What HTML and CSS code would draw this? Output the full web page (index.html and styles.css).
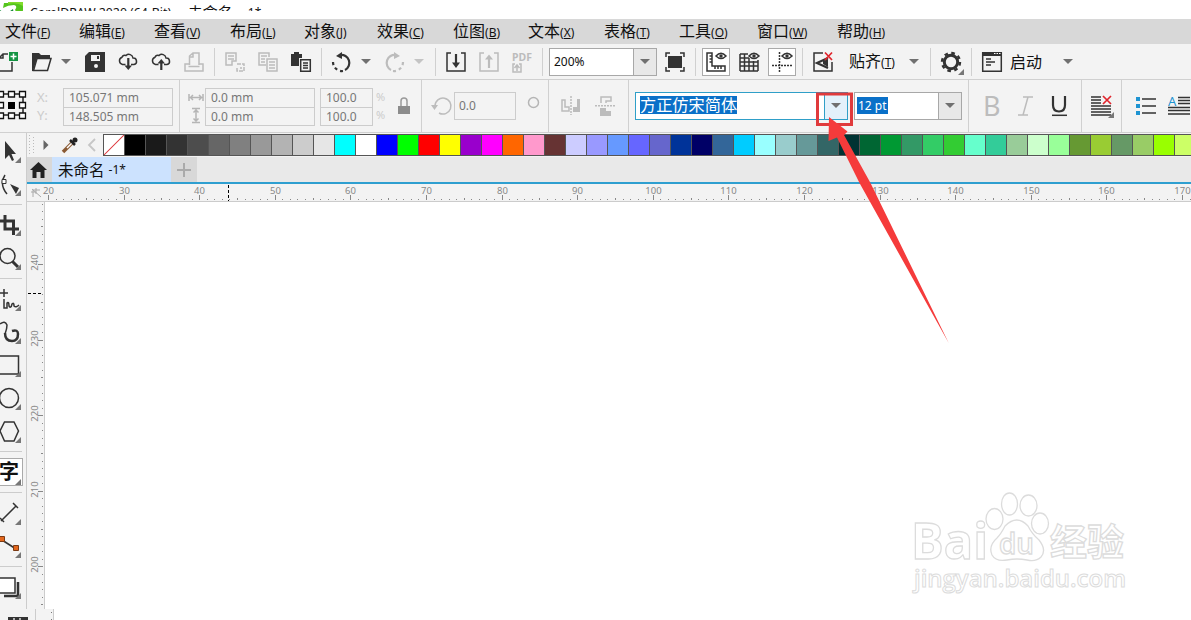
FILE: index.html
```html
<!DOCTYPE html>
<html lang="zh-CN">
<head>
    <meta charset="UTF-8">
    <meta name="viewport" content="width=device-width, initial-scale=1.0">
    <title>CorelDRAW 2020</title>
    <link rel="stylesheet" href="styles.css">
</head>
<body>

    <!-- Title bar -->
    <header class="titlebar">
        <svg class="titlebar__logo" width="26" height="16" viewBox="0 0 26 16">
            <path d="M4 3H23V10Q23 13 18 14L15 10Q18 6 14 5Q8 5 3 8Z" fill="#54c41c"/>
            <path d="M8 2H23V6Q17 2 8 4Z" fill="#80dc2c"/>
            <path d="M0 10Q6 15 13 9L14 15H0Z" fill="#168a3a"/>
        </svg>
        <span class="titlebar__app">CorelDRAW 2020 (64-Bit)</span>
        <span class="titlebar__doc">- 未命名</span>
        <span>-1*</span>
    </header>

    <!-- Menu -->
    <nav class="menu">
        <span>文件<small>(<u>F</u>)</small></span>
        <span>编辑<small>(<u>E</u>)</small></span>
        <span>查看<small>(<u>V</u>)</small></span>
        <span>布局<small>(<u>L</u>)</small></span>
        <span>对象<small>(<u>J</u>)</small></span>
        <span>效果<small>(<u>C</u>)</small></span>
        <span>位图<small>(<u>B</u>)</small></span>
        <span>文本<small>(<u>X</u>)</small></span>
        <span>表格<small>(<u>T</u>)</small></span>
        <span>工具<small>(<u>O</u>)</small></span>
        <span>窗口<small>(<u>W</u>)</small></span>
        <span>帮助<small>(<u>H</u>)</small></span>
    </nav>

    <!-- Standard toolbar -->
    <div class="toolbar">
        <svg class="icon" viewBox="0 0 20 20"><path d="M0 6L4 2H9M13 10V19H0M0 6H4V2" class="line"/><path d="M10 0H19V9H10Z" fill="#149443"/><path d="M14.5 1.500V7.500M11.500 4.500H17.500" stroke="#fff" stroke-width="1.500"/></svg>
        <svg class="icon" viewBox="0 0 20 20"><path d="M0 1H7L9 3H18V6H5L1 19H0Z" class="solid"/><path d="M5 6.500H19L15.500 18.500H1.500Z" class="line"/></svg>
        <svg class="caret" viewBox="0 0 14 6"><path d="M2 0H12L7 5Z"/></svg>
        <svg class="icon" viewBox="0 0 20 20"><path d="M4 0H20V20H0V4Z" class="solid"/><path d="M6 3H15V9H6ZM9 14A2 2 0 1 0 13 14A2 2 0 1 0 9 14" fill="#f3f3f3"/><path d="M12 4H14V7H12Z" class="solid"/></svg>
        <svg class="icon" viewBox="0 0 20 20"><path d="M7.500 12.500H4.500A3.800 3.800 0 0 1 4 5.200A3 3 0 0 1 8 3.500A4.200 4.200 0 0 1 15 6A3.300 3.300 0 0 1 16 12.500H13" class="line"/><path d="M10.300 6V15" class="line thick"/><path d="M6.500 13.500H14L10.300 18Z" class="solid"/></svg>
        <svg class="icon" viewBox="0 0 20 20"><path d="M7.500 12.500H4.500A3.800 3.800 0 0 1 4 5.200A3 3 0 0 1 8 3.500A4.200 4.200 0 0 1 15 6A3.300 3.300 0 0 1 16 12.500H13" class="line"/><path d="M10.300 9V18" class="line thick"/><path d="M6.500 11.500H14L10.300 7Z" class="solid"/></svg>
        <svg class="icon icon--off" viewBox="0 0 20 20"><path d="M5.500 13V4L9 1H15V13M9 1V5H5M5 12H1V19H19V12H15M4.500 14.500H15.500" class="line"/></svg>
        <i class="sep"></i>
        <svg class="icon icon--off" viewBox="0 0 20 20"><path d="M1 1H11V9H7V13H1ZM3 4H9M3 7H9" class="line"/><path d="M12 12H19V19H12V16M15 16H17" class="line" stroke-dasharray="4 1"/></svg>
        <svg class="icon icon--off" viewBox="0 0 20 20"><path d="M8 13H1V1H11V5M3 4H9M3 7H7M3 10H7M9 7H19V19H9ZM11 10H17M11 13H17M11 16H17" class="line"/></svg>
        <svg class="icon" viewBox="0 0 20 20"><path d="M0 2H3V0H8V2H11V6H8V14H0Z" class="solid"/><path d="M9.700 7.700H19.300V19.300H9.700ZM12 11H17M12 13.500H17M12 16H17" class="line"/></svg>
        <i class="sep"></i>
        <svg class="icon" viewBox="0 0 20 20"><path d="M9 3A8 8 0 0 1 14 18" class="line thick"/><path d="M12 19A9 9 0 0 1 2 10" class="line thick" stroke-dasharray="3 3"/><path d="M5 4L11 0V7Z" class="solid"/></svg>
        <svg class="caret" viewBox="0 0 14 6"><path d="M2 0H12L7 5Z"/></svg>
        <svg class="icon icon--off" viewBox="0 0 20 20"><path d="M12 3A8 8 0 0 0 7 18" class="line thick"/><path d="M9 19A9 9 0 0 0 19 10" class="line thick" stroke-dasharray="3 3"/><path d="M16 4L10 0V7Z" class="solid"/></svg>
        <svg class="caret caret--off" viewBox="0 0 14 6"><path d="M2 0H12L7 5Z"/></svg>
        <i class="sep"></i>
        <svg class="icon" viewBox="0 0 20 20"><path d="M5 1H1V19H19V1H15" class="line"/><path d="M10 2V12" class="line thick"/><path d="M6 10.500H14L10 16Z" class="solid"/></svg>
        <svg class="icon icon--off" viewBox="0 0 20 20"><path d="M5 1H1V19H19V1H15" class="line"/><path d="M10 6V16" class="line thick"/><path d="M6 7.500H14L10 2.500Z" class="solid"/></svg>
        <div class="pdf">PDF<svg width="10" height="10" viewBox="0 0 10 10"><path d="M3 1H1V9H9V1H7M5 8V3M2.500 5L5 2L7.500 5" class="line"/></svg></div>
        <i class="sep"></i>
        <div class="combo combo--zoom"><span>200%</span><b><svg class="caret" viewBox="0 0 14 6"><path d="M2 0H12L7 5Z"/></svg></b></div>
        <svg class="icon" viewBox="0 0 20 20"><path d="M1 5V1H5M15 1H19V5M19 15V19H15M5 19H1V15" class="line"/><path d="M3 4H17V16H3Z" class="solid"/></svg>
        <i class="sep"></i>
        <div class="toggle"><svg class="icon" viewBox="0 0 20 20"><path d="M1 1H6V14H19V19H1ZM3.500 4H6M3.500 7H6M3.500 10H6M9 14V17M12 14V17M15 14V17" class="line"/><path d="M10 4Q15 -1.500 20 4Q15 9 10 4Z" class="line"/><circle cx="15" cy="4" r="1.700" class="solid"/></svg></div>
        <svg class="icon" viewBox="0 0 20 20"><path d="M1 2H9M1 6H10M1 10H19M1 14H19M1 19H19M1 2V19M5.500 2V19M10 6V19M14.500 9V19M19 8V19" class="line"/><path d="M10 4Q15 -1.500 20 4Q15 9 10 4Z" class="line"/><circle cx="15" cy="4" r="1.700" class="solid"/></svg>
        <div class="toggle"><svg class="icon" viewBox="0 0 20 20"><path d="M7.500 0V20M0 13.500H20" class="line" stroke-dasharray="2 1"/><path d="M10 4Q15 -1.500 20 4Q15 9 10 4Z" class="line"/><circle cx="15" cy="4" r="1.700" class="solid"/></svg></div>
        <i class="sep"></i>
        <svg class="icon" viewBox="0 0 20 20"><path d="M10 1H1V19H19V10" class="line"/><path d="M15 6L4 11L15 16" class="line thick"/><path d="M10 9L15 7V15L10 12Z" class="solid"/><path d="M12 0.500L19 8M19 0.500L12 8" stroke="#e0242c" stroke-width="1.700"/></svg>
        <span class="toolbar__text">贴齐<small>(<u>T</u>)</small></span>
        <svg class="caret" viewBox="0 0 14 6"><path d="M2 0H12L7 5Z"/></svg>
        <i class="sep"></i>
        <svg class="icon icon--gear" viewBox="0 0 24 23"><circle cx="10" cy="10" r="6.700" fill="none" stroke="#333" stroke-width="3"/><circle cx="10" cy="10" r="9" fill="none" stroke="#333" stroke-width="2.400" stroke-dasharray="3.600 3.470"/><path d="M23 17V23H17Z" fill="#777"/></svg>
        <i class="sep"></i>
        <svg class="icon" viewBox="0 0 20 20"><path d="M0.700 0.700H19.300V19.300H0.700ZM4 7H9M4 10H13M4 13H9" class="line"/><path d="M0 0H20V4H0Z" class="solid"/><path d="M12 1.500H19" stroke="#fff" stroke-dasharray="1.500 1"/></svg>
        <span class="toolbar__text">启动</span>
        <svg class="caret" viewBox="0 0 14 6"><path d="M2 0H12L7 5Z"/></svg>
    </div>

    <!-- Property bar -->
    <div class="props">
        <svg class="origin" width="28" height="32" viewBox="0 0 28 32"><path d="M1 5H23V26H1M23 5V26" fill="none" stroke="#222" stroke-width="1.500"/><g fill="#fff" stroke="#111" stroke-width="1.300"><path d="M-2 2.500H3.500V8H-2ZM-2 13.500H3.500V19H-2ZM-2 24H3.500V29.500H-2ZM8.500 2.500H14.500V8H8.500ZM8.500 24H14.500V29.500H8.500ZM19.500 2.500H25.500V8H19.500ZM19.500 13.500H25.500V19H19.500ZM19.500 24H25.500V29.500H19.500Z"/></g><path d="M8 13H15V20H8Z" fill="#000"/></svg>
        <div class="pair"><span>X:</span><span>Y:</span></div>
        <div class="fields"><span>105.071 mm</span><span>148.505 mm</span></div>
        <i class="sep"></i>
        <svg width="16" height="36" viewBox="0 0 16 36"><g fill="none" stroke="#b5b5b5" stroke-width="1.500"><path d="M1 6V13M15 6V13M2 9.500H14M5 7L2.500 9.500L5 12M11 7L13.500 9.500L11 12M4 20.500H12M4 34.500H12M8 21V34M5.500 24.500L8 22L10.500 24.500M5.500 30.500L8 33L10.500 30.500"/></g></svg>
        <div class="fields"><span>0.0 mm</span><span>0.0 mm</span></div>
        <div class="fields"><span>100.0</span><span>100.0</span></div>
        <div class="pair pair--percent"><span>%</span><span>%</span></div>
        <svg width="14" height="18" viewBox="0 0 14 18"><path d="M4 9V4A3 3 0 0 1 10 4V9" fill="none" stroke="#9a9a9a" stroke-width="1.500"/><path d="M1 9H13V17H1Z" fill="#8c8c8c"/></svg>
        <i class="sep"></i>
        <svg class="icon icon--off" viewBox="0 0 20 20"><path d="M3 10A8 8 0 1 1 7 17" class="line"/><path d="M-1 9H6L2.500 14Z" class="solid"/></svg>
        <div class="angle">0.0</div>
        <svg class="degree" width="13" height="13" viewBox="0 0 13 13"><circle cx="6.500" cy="6.500" r="5" fill="none" stroke="#b5b5b5" stroke-width="1.500"/></svg>
        <i class="sep"></i>
        <svg class="icon icon--off" viewBox="0 0 20 20"><path d="M1 4H4V11H8V15H1Z" class="line"/><path d="M19 3H16V11H12V16H19Z" class="solid"/><path d="M10 0V19" class="line" stroke-dasharray="2 1"/></svg>
        <svg class="icon icon--off" viewBox="0 0 20 20"><path d="M6 7V1H16V5H11V7" class="line"/><path d="M5 12V20H16V15H11V12Z" class="solid"/><path d="M0 9.700H20" class="line" stroke-dasharray="2 1"/></svg>
        <i class="sep"></i>
        <div class="combo combo--font"><span><mark>方正仿宋简体</mark></span><b><svg class="caret" viewBox="0 0 14 6"><path d="M2 0H12L7 5Z"/></svg></b></div>
        <div class="combo combo--size"><span><mark>12 pt</mark></span><b><svg class="caret" viewBox="0 0 14 6"><path d="M2 0H12L7 5Z"/></svg></b></div>
        <i class="sep"></i>
        <span class="style-btn style-btn--bold">B</span>
        <svg class="icon icon--off" viewBox="0 0 20 20"><path d="M5 1H15M0 19H10M10 1L5 19" class="line"/></svg>
        <svg class="icon" viewBox="0 0 20 20"><path d="M4 0V9Q4 15.500 10 15.500Q16 15.500 16 9V0" fill="none" stroke="#333" stroke-width="2.200"/><path d="M3 19.300H18" class="line"/></svg>
        <i class="sep"></i>
        <svg width="24" height="24" viewBox="0 0 24 24"><path d="M0 3H10M0 6H10M0 9H10M0 12H20M0 15H20M0 18H20M0 21H20" class="line"/><path d="M12 2L20 10M20 2L12 10" stroke="#e0242c" stroke-width="1.700"/><path d="M23 18V24H17Z" fill="#777"/></svg>
        <i class="sep"></i>
        <svg width="22" height="20" viewBox="0 0 22 20"><path d="M1 1H5V5H1ZM1 8H5V12H1ZM1 15H5V19H1Z" fill="#1e94d2"/><path d="M7 3H21M7 10H21M7 17H21" class="line"/></svg>
        <div class="dropcap"><svg width="22" height="20" viewBox="0 0 22 20"><path d="M10 1.500H22M10 4.500H22M10 7.500H22M0 11.500H22M0 14.500H22M0 18H22" class="line"/><text x="0" y="9.500" font-size="13" fill="#1e94d2">A</text></svg></div>
    </div>

    <div class="workspace">
        <!-- Toolbox -->
        <aside class="toolbox">
            <svg height="35" viewBox="0 0 26 35"><path d="M5 8V26L9 22L12 28L14 27L11.500 21H16Z" class="solid"/><path d="M21 24V30H15Z" class="fly"/></svg>
            <svg height="36" viewBox="0 0 26 36"><path d="M5 7Q-1 16 7 26" class="line"/><path d="M2 11.500H6V15.500H2Z" fill="#fff" stroke="#333"/><path d="M10 16L19 20L16 26Z" class="solid"/><path d="M21 22V28H15Z" class="fly"/></svg>
            <hr>
            <svg height="36" viewBox="0 0 26 36"><path d="M0 16H13.500V30M5 10V24H19" fill="none" stroke="#333" stroke-width="3"/><path d="M21 25V31H15Z" class="fly"/></svg>
            <svg height="37" viewBox="0 0 26 37"><circle cx="7.500" cy="15" r="7.500" class="line" fill="none"/><path d="M12.500 20.500L18 26" stroke="#333" stroke-width="3"/><path d="M21 23V29H15Z" class="fly"/></svg>
            <hr>
            <svg height="37" viewBox="0 0 26 37"><path d="M0 14H8M4 10V18M4 20V29H7V24Q9 22 9 27Q11 30 12 25Q14 23 14 27Q16 29 19 26" class="line"/><path d="M21 26V32H15Z" class="fly"/></svg>
            <svg height="33" viewBox="0 0 26 33"><path d="M0 8Q5 4 7 9Q7 13 5 18" class="line"/><path d="M5 17Q5 25 12 25Q18 25 18 18Q18 13 12 15" fill="none" stroke="#333" stroke-width="2.500"/><path d="M21 22V28H15Z" class="fly"/></svg>
            <svg height="33" viewBox="0 0 26 33"><path d="M-1 7H18.500V25H-1" class="line"/><path d="M21 22V28H15Z" class="fly"/></svg>
            <svg height="33" viewBox="0 0 26 33"><circle cx="9" cy="16" r="9.500" class="line"/><path d="M21 22V28H15Z" class="fly"/></svg>
            <svg height="36" viewBox="0 0 26 36"><path d="M4.500 7H14L18.500 16L14 26H4.500L0 16Z" class="line"/><path d="M21 22V28H15Z" class="fly"/></svg>
            <hr>
            <div class="toolbox__text"><span>字</span><svg width="6" height="6" viewBox="0 0 6 6"><path d="M6 0V6H0Z" class="fly"/></svg></div>
            <hr>
            <svg height="37" viewBox="0 0 26 37"><path d="M1 28L16 13M0 25L4 29M13 10L18 15" class="line"/><path d="M21 26V32H15Z" class="fly"/></svg>
            <svg height="36" viewBox="0 0 26 36"><path d="M2 10L16 19" class="line"/><path d="M-1 6.500H4.500V11.500H-1ZM13.500 20.500V15.500H18.500V20.500Z" fill="#e2661c" stroke="#7a3a14"/><path d="M21 22V28H15Z" class="fly"/></svg>
            <hr>
            <svg height="41" viewBox="0 0 26 41"><path d="M18 15V29H4" fill="none" stroke="#333" stroke-width="2.500"/><path d="M-1 11H15V26H-1" fill="#fff" stroke="#333" stroke-width="1.500"/><path d="M21 26V32H15Z" class="fly"/></svg>
        </aside>

        <main class="document">
            <!-- Color palette -->
            <div class="palette">
                <svg width="7" height="20" viewBox="0 0 7 20"><path d="M1.500 0V20M5.500 2V20" stroke="#bbb" stroke-dasharray="1 2"/></svg>
                <svg width="6" height="10" viewBox="0 0 6 10"><path d="M0.500 0L5.500 5L0.500 10Z" fill="#666"/></svg>
                <svg width="18" height="18" viewBox="0 0 18 18"><path d="M1 16L10 7" stroke="#8a5a34" stroke-width="3.500"/><path d="M5 12L10 7" stroke="#fff" stroke-width="1.500"/><path d="M8 4L13 9M10 7L14 3" stroke="#222" stroke-width="2.500"/><circle cx="13" cy="4" r="2.500" fill="#222"/></svg>
                <svg width="9" height="14" viewBox="0 0 9 14"><path d="M7 1L1 7L7 13" fill="none" stroke="#c6c6c6" stroke-width="1.800"/></svg>
                <div class="swatches" id="swatches"></div>
            </div>

            <!-- Document tabs -->
            <div class="tabs">
                <div class="tabs__home"><svg width="17" height="16" viewBox="0 0 17 16"><path d="M8.500 0L17 8H14.500V16H10.500V10H6.500V16H2.500V8H0Z" fill="#222"/></svg></div>
                <div class="tabs__item">未命名 <small>-1*</small></div>
                <div class="tabs__add"><svg width="14" height="14" viewBox="0 0 14 14"><path d="M7 0V14M0 7H14" stroke="#aaa" stroke-width="2"/></svg></div>
            </div>

            <svg class="ruler-x" id="rulerX" width="1164" height="17" viewBox="27 184 1164 17"><path d="M32 189L41 197M33 197V190H40M31 192H36M36 188V194" fill="none" stroke="#aaa"/></svg>
            <div class="page">
                <svg class="ruler-y" id="rulerY" width="17" height="407" viewBox="27 202 17 407"></svg>
                <div class="canvas"></div>
            </div>
        </main>
    </div>

    <footer class="footer">
        <svg width="60" height="12" viewBox="0 0 60 12"><path d="M0 0H53V12H0Z" fill="#f3f3f3"/><path d="M8 8H28V12H8Z" fill="#333"/><path d="M14 9V12M20 9V12" stroke="#ddd" stroke-width="1.500"/><path d="M35.500 0V12M53.500 0V12" stroke="#ccc"/><path d="M51.500 3V12" stroke="#777" stroke-dasharray="1 6"/></svg>
    </footer>

    <!-- Watermark -->
    <svg class="watermark" width="230" height="120" viewBox="905 480 230 120">
        <g fill="#fff" stroke="#dcdcdc" stroke-width="1.300">
            <text x="911" y="559" font-size="50" font-weight="700" textLength="77" lengthAdjust="spacingAndGlyphs">Bai</text>
            <ellipse cx="994.500" cy="519" rx="8.500" ry="10.500"/>
            <ellipse cx="1009.500" cy="504" rx="8" ry="11"/>
            <ellipse cx="1028.500" cy="505.500" rx="8.500" ry="10.500"/>
            <ellipse cx="1040" cy="523.500" rx="8.500" ry="10.500"/>
            <path d="M1005 526Q1017 514 1028 526Q1032 534 1039 540Q1047 550 1041 557Q1036 562 1027 560Q1017 558 1007 560Q996 562 992 555Q988 546 997 538Q1001 534 1005 526Z"/>
            <text x="999" y="554" font-size="28" font-weight="600" textLength="35" lengthAdjust="spacingAndGlyphs">du</text>
            <text x="1050" y="556" font-size="37" font-weight="700" textLength="74" class="cjk">经验</text>
            <text x="914" y="587" font-size="24" font-weight="600" stroke-width="1" textLength="212" lengthAdjust="spacingAndGlyphs">jingyan.baidu.com</text>
        </g>
    </svg>

    <!-- Arrow over the font list -->
    <svg class="pointer" width="140" height="260" viewBox="814 90 140 260">
        <path d="M817.500 94H851.500V124.500H817.500Z" fill="none" stroke="#e03a3c" stroke-width="3"/>
        <path d="M829 117L847.500 131.500L844 135L870.500 183L948.700 343L859.500 183L837 137.500L828.500 141Z" fill="#f53b3b"/>
    </svg>

    <script src="script.js"></script>
</body>
</html>
```
FILE: styles.css
```css
* {
    box-sizing: border-box;
}

body {
    margin: 0;
    width: 1191px;
    height: 620px;
    overflow: hidden;
    position: relative;
    background: #fff;
    color: #111;
    font-family: "Noto Sans", "Noto Sans CJK SC", sans-serif;
    font-size: 12px;
}

svg {
    display: block;
    overflow: visible;
}

small {
    font-size: 12px;
}

/* Title bar */
.titlebar {
    display: flex;
    height: 11px;
    margin-bottom: 8px;
    overflow: hidden;
    line-height: 25px;
    white-space: nowrap;
}

.titlebar__logo {
    flex: none;
    margin-right: 4px;
}

.titlebar__app {
    width: 147px;
    font-size: 12.3px;
}

.titlebar__doc {
    width: 67px;
    padding-left: 2px;
    font-size: 15px;
}

/* Menu */
.menu {
    display: grid;
    grid-template-columns: 74px 75px 76px 74px 73px 76px 75px 76px 75px 78px 80px 60px;
    height: 25px;
    padding-left: 5px;
    background: #d8d8d8;
    font-size: 16px;
    line-height: 25px;
    white-space: nowrap;
}

/* Icons */
.icon {
    width: 20px;
    height: 20px;
}

.icon--gear {
    width: 24px;
    height: 23px;
    margin-top: 3px;
}

.line {
    fill: none;
    stroke: #333;
    stroke-width: 1.5;
}

.thick {
    stroke-width: 2.2;
}

.solid {
    fill: #333;
}

.icon--off .line,
.pdf .line {
    stroke: #bcbcbc;
}

.icon--off .solid {
    fill: #bcbcbc;
}

.fly {
    fill: #777;
}

.caret {
    width: 14px;
    height: 6px;
    fill: #707070;
}

.caret--off {
    fill: #c4c4c4;
}

.sep {
    width: 1px;
    height: 28px;
    background: #d0d0d0;
}

/* Standard toolbar */
.toolbar {
    display: grid;
    grid-template-columns: 32px 27px 26px 33px 33px 33px 30px 11px 33px 33px 30px 10px 28px 25px 28px 23px 11px 33px 33px 30px 7px 116px 30px 7px 37px 29px 34px 11px 36px 58px 23px 11px 30px 11px 28px 51px 14px;
    align-items: center;
    height: 36px;
    padding-top: 1px;
    background: #f3f3f3;
    border-bottom: 1px solid #d0d0d0;
}

.toolbar > .icon:first-child {
    margin-left: -1px;
}

.toolbar__text {
    font-size: 16px;
    line-height: 24px;
    white-space: nowrap;
}

.toggle {
    display: flex;
    align-items: center;
    justify-content: center;
    width: 28px;
    height: 28px;
    border: 1px solid #aaa;
    background: #fff;
}

.pdf {
    color: #bcbcbc;
    font-size: 10.5px;
    font-weight: bold;
    line-height: 11px;
}

.combo {
    display: flex;
    height: 28px;
    border: 1px solid #a8a8a8;
    background: #fff;
    line-height: 26px;
}

.combo span {
    flex: 1;
    padding-left: 4px;
}

.combo b {
    display: flex;
    align-items: center;
    justify-content: center;
    width: 23px;
    border-left: 1px solid #a8a8a8;
    background: #e8e8e8;
}

.combo mark {
    background: #0a70c8;
    color: #fff;
}

.combo--zoom {
    width: 108px;
}

.combo--font {
    width: 213px;
    border-color: #2f9fc8;
}

.combo--font span {
    font-size: 16.2px;
}

.combo--font mark {
    display: block;
    width: 97px;
    height: 18px;
    margin-top: 3px;
    line-height: 18px;
    white-space: nowrap;
}

.combo--font b {
    border-color: #2f9fc8;
    background: #e3f1fb;
}

.combo--size {
    width: 108px;
}

.combo--size span {
    padding-left: 2px;
}

.combo--size mark {
    padding: 0 1px;
}

/* Property bar */
.props {
    display: grid;
    grid-template-columns: 37px 26px 116px 9px 17px 115px 56px 21px 24px 11px 22px 73px 21px 13px 34px 33px 7px 219px 114px 15px 35px 31px 32px 10px 30px 14px 33px 22px;
    align-items: center;
    height: 53px;
    background: #f3f3f3;
    border-bottom: 1px solid #d0d0d0;
    color: #777;
}

.props .sep {
    height: 52px;
}

.origin {
    margin-top: -3px;
}

.pair {
    color: #ccc;
    font-size: 13px;
    line-height: 18px;
}

.pair span {
    display: block;
}

.pair--percent {
    font-size: 11px;
}

.fields {
    width: 110px;
    margin-top: 1px;
    border: 1px solid #ccc;
    line-height: 18px;
    font-size: 12px;
}

.fields + .fields {
    width: 53px;
}

.fields span {
    display: block;
    height: 18px;
    padding-left: 5px;
}

.fields span + span {
    border-top: 1px solid #ccc;
}

.angle {
    width: 62px;
    height: 28px;
    padding-left: 4px;
    border: 1px solid #ccc;
    line-height: 26px;
}

.degree {
    margin-top: -8px;
}

.style-btn--bold {
    color: #bcbcbc;
    font-size: 27px;
    line-height: 28px;
}

.dropcap {
    overflow: hidden;
}

/* Workspace */
.workspace {
    display: flex;
    height: 476px;
}

.toolbox {
    width: 27px;
    border-right: 1px solid #ccc;
    background: #f3f3f3;
    overflow: hidden;
}

.toolbox > svg {
    width: 26px;
}

.toolbox hr {
    width: 22px;
    height: 1px;
    margin: 0;
    border: none;
    background: #ccc;
}

.toolbox__text {
    display: flex;
    align-items: flex-end;
    width: 23px;
    height: 28px;
    margin: 6px 0;
    border: 1px solid #aaa;
    border-left: none;
    background: #fff;
}

.toolbox__text span {
    width: 16px;
    margin-left: -1px;
    font-size: 20px;
    font-weight: bold;
    line-height: 26px;
}

.document {
    width: 1164px;
}

/* Palette */
.palette {
    display: grid;
    grid-template-columns: 15px 19px 26px 15px 1088px;
    align-items: center;
    height: 24px;
    padding-left: 1px;
    background: #f3f3f3;
}

.swatches {
    display: flex;
    height: 22px;
    border: 1px solid #555;
}

.swatch {
    flex: none;
    width: 21px;
    border-right: 1px solid #555;
}

.swatch--none {
    background: linear-gradient(135deg, #fff 47%, #e0484c 49%, #e0484c 51%, #fff 53%);
}

/* Tabs */
.tabs {
    display: flex;
    height: 27px;
    border-bottom: 2px solid #2f9fd0;
    background: #e9e9e9;
}

.tabs > div {
    display: flex;
    align-items: center;
    height: 25px;
}

.tabs .tabs__home {
    width: 25px;
    padding-left: 3px;
    background: #d8d8d8;
}

.tabs__item {
    width: 119px;
    padding-left: 6px;
    background: #cce2fe;
    font-size: 15.5px;
    white-space: pre;
}

.tabs__add {
    width: 26px;
    justify-content: center;
    background: #d8d8d8;
}

/* Rulers */
.ruler-x {
    box-sizing: content-box;
    overflow: hidden;
    background: #f3f3f3;
    border-bottom: 1px solid #ccc;
}

.ruler-y {
    box-sizing: content-box;
    overflow: hidden;
    background: #f3f3f3;
    border-right: 1px solid #ccc;
}

.ruler-label {
    fill: #888;
    font-size: 9.5px;
    text-anchor: middle;
}

.page {
    display: flex;
}

.canvas {
    flex: 1;
    background: #fff;
}

.footer {
    height: 11px;
    overflow: hidden;
}

/* Overlays */
.watermark {
    position: absolute;
    left: 905px;
    top: 480px;
    font-family: "Open Sans", sans-serif;
}

.watermark .cjk {
    font-family: "Noto Sans CJK SC", sans-serif;
}

.pointer {
    position: absolute;
    left: 814px;
    top: 90px;
}
```
FILE: script.js
```js
const colors = [
    "#000000", "#1a1a1a", "#333333", "#4d4d4d", "#666666", "#808080", "#999999", "#b3b3b3", "#cccccc", "#e6e6e6",
    "#00ffff", "#ffffff", "#0000ff", "#00ff00", "#ff0000", "#ffff00", "#9900cc", "#ff00ff", "#ff6600", "#ff99cc",
    "#663333", "#ccccff", "#9999ff", "#6699ff", "#6666ff", "#6666cc", "#003399", "#000066", "#336699", "#00ccff",
    "#99ffff", "#99cccc", "#669999", "#336666", "#003333", "#006633", "#009933", "#339966", "#33cc66", "#33cc33",
    "#66ffcc", "#33cc99", "#99cc99", "#ccffcc", "#99ff99", "#669933", "#99cc33", "#669966", "#99cc66", "#99ff00",
    "#ccff66"
];

const swatches = document.getElementById("swatches");
swatches.innerHTML = '<div class="swatch swatch--none"></div>' +
    colors.map((c) => `<div class="swatch" style="background:${c}"></div>`).join("");

// Rulers: one unit is 7.56px, a label every 10 units
const unit = 7.56;

let marks = "";
for (let i = 0; i <= 151; i++) {
    const x = Math.round(48 + i * unit) + 0.5;
    const len = i % 10 === 0 ? 5 : i % 5 === 0 ? 2 : 1;
    marks += `<path d="M${x} 200V${200 - len}" stroke="#888"/>`;
    if (i % 10 === 0) {
        marks += `<text class="ruler-label" x="${x}" y="194">${20 + i}</text>`;
    }
}
marks += '<path d="M228.5 185V201" stroke="#000" stroke-dasharray="3 2"/>';
document.getElementById("rulerX").innerHTML += marks;

marks = "";
for (let i = -8; i <= 45; i++) {
    const y = Math.round(264 + i * unit) + 0.5;
    const len = i % 10 === 0 ? 5 : i % 5 === 0 ? 2 : 1;
    marks += `<path d="M43 ${y}H${43 - len}" stroke="#888"/>`;
    if (i % 10 === 0) {
        marks += `<text class="ruler-label" transform="translate(38 ${y - 2}) rotate(-90)">${240 - i}</text>`;
    }
}
marks += '<path d="M28 293.5H43" stroke="#000" stroke-dasharray="3 2"/>';
document.getElementById("rulerY").innerHTML = marks;
```
